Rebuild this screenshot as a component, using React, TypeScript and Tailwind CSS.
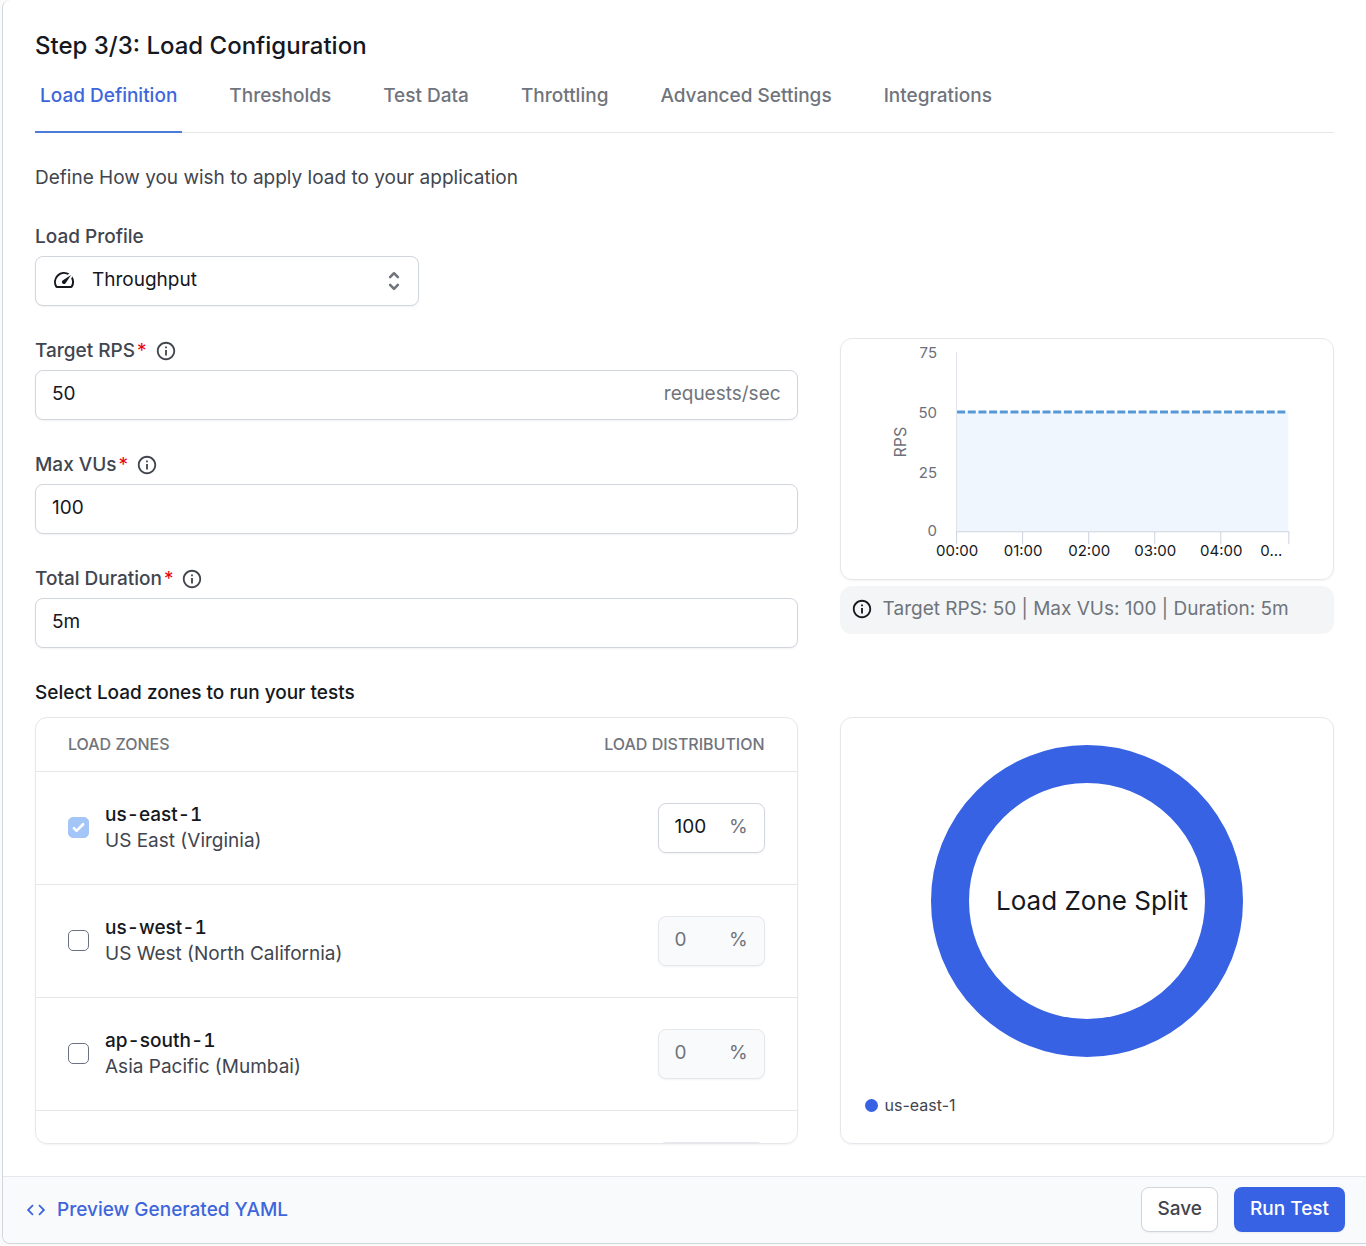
import React from "react";
import { MdCode, MdInfoOutline, MdSpeed } from "react-icons/md";
import { HiSelector } from "react-icons/hi";

const tabs = [
  "Load Definition",
  "Thresholds",
  "Test Data",
  "Throttling",
  "Advanced Settings",
  "Integrations",
];

const fields = [
  { id: "target-rps", label: "Target RPS", value: "50", unit: "requests/sec" },
  { id: "max-vus", label: "Max VUs", value: "100" },
  { id: "duration", label: "Total Duration", value: "5m" },
];

const zones = [
  { id: "us-east-1", name: "US East (Virginia)", share: 100, selected: true },
  { id: "us-west-1", name: "US West (North California)", share: 0, selected: false },
  { id: "ap-south-1", name: "Asia Pacific (Mumbai)", share: 0, selected: false },
  { id: "eu-west-1", name: "Europe (Ireland)", share: 0, selected: false },
];

const yTicks = [
  { label: "75", y: 14 },
  { label: "50", y: 74 },
  { label: "25", y: 134 },
  { label: "0", y: 192 },
];

const xTicks = [
  { label: "00:00", x: 116 },
  { label: "01:00", x: 182 },
  { label: "02:00", x: 248 },
  { label: "03:00", x: 314 },
  { label: "04:00", x: 380 },
];

const LoadChart = () => (
  <svg viewBox="0 0 492 240" className="block w-full" role="img" aria-label="Requests per second over time">
    <rect x="115" y="73" width="332" height="119" fill="#f0f6fe" />
    <path d="M115.5 13V192" stroke="#e0e3e8" />
    <path
      d="M115 192.5H447.5M115.5 192V205M181.5 192V205M247.5 192V205M313.5 192V205M379.5 192V205M447.5 192V205"
      stroke="#ccd2e0"
      fill="none"
    />
    <path d="M116 73H444" stroke="#5499d6" strokeWidth="3" strokeDasharray="8 2.67" />
    {yTicks.map((tick) => (
      <text key={tick.label} x="96" y={tick.y + 5} textAnchor="end" fontSize="15" fill="#6e7079">
        {tick.label}
      </text>
    ))}
    {xTicks.map((tick) => (
      <text key={tick.label} x={tick.x} y="217" textAnchor="middle" fontSize="15" fill="#15181e">
        {tick.label}
      </text>
    ))}
    <text x="430" y="217" textAnchor="middle" fontSize="15" fill="#15181e">
      0...
    </text>
    <text transform="translate(65 103) rotate(-90)" textAnchor="middle" fontSize="16" fill="#6e7079">
      RPS
    </text>
  </svg>
);

const App = () => {
  return (
    <div className="bg-[#fafafa] pb-[2px] pl-[2px] font-['Inter',sans-serif] text-[19px] leading-7 text-[#15181e]">
      <div className="overflow-hidden rounded-l-lg border-b border-l border-gray-300 bg-white">
        <main className="px-8 pt-8 pb-8">
          <h1 className="text-2xl leading-7 font-medium">Step 3/3: Load Configuration</h1>
          <nav className="mt-[22px] flex gap-[42px] border-b border-gray-200" aria-label="Configuration">
            {tabs.map((tab, i) => (
              <a
                key={tab}
                href="#"
                className={
                  i === 0
                    ? "-mb-px border-b-2 border-[#4a7bd8] px-[5px] pb-[21px] font-medium text-[#3e66dc]"
                    : "-mb-px border-b-2 border-transparent px-[5px] pb-[21px] font-medium text-[#70747c]"
                }
              >
                {tab}
              </a>
            ))}
          </nav>

          <p className="mt-[31px] text-[#41454e]">Define How you wish to apply load to your application</p>

          <div className="mt-8 w-96">
            <label htmlFor="profile" className="block leading-[26px] font-medium text-[#41454e]">
              Load Profile
            </label>
            <div className="relative mt-[6px]">
              <select
                id="profile"
                className="h-[50px] w-full appearance-none rounded-lg border border-gray-300 bg-white pb-[3px] pl-14 shadow-xs"
              >
                <option>Throughput</option>
              </select>
              <MdSpeed className="pointer-events-none absolute top-3 left-[17px] size-6" />
              <HiSelector className="pointer-events-none absolute top-3 right-3 size-[26px] text-[#70747c]" />
            </div>
          </div>

          <div className="mt-8 grid grid-cols-5 gap-x-[42px]">
            <div className="col-span-3 flex flex-col gap-8">
              {fields.map((field) => (
                <div key={field.id}>
                  <div className="flex items-center leading-[26px]">
                    <label htmlFor={field.id} className="font-medium text-[#41454e]">
                      {field.label}
                      <span className="ml-[2px] font-normal text-red-600">*</span>
                    </label>
                    <MdInfoOutline className="ml-2 size-[22px] text-[#41454e]" />
                  </div>
                  <div className="mt-[6px] flex h-[50px] items-center rounded-lg border border-gray-300 bg-white px-4 pb-[3px] shadow-xs">
                    <input id={field.id} defaultValue={field.value} className="min-w-0 flex-1 outline-none" />
                    {field.unit && <span className="text-[#70747c]">{field.unit}</span>}
                  </div>
                </div>
              ))}
            </div>
            <div className="col-span-2">
              <div className="rounded-xl border border-gray-200 shadow-xs">
                <LoadChart />
              </div>
              <div className="mt-[6px] flex h-12 items-center gap-[10px] rounded-xl bg-[#f3f5f6] px-[11px] pb-[2px] text-[#70747c]">
                <MdInfoOutline className="size-[22px] shrink-0 text-[#15181e]" />
                <span>Target RPS: 50 | Max VUs: 100 | Duration: 5m</span>
              </div>
            </div>
          </div>

          <h2 className="mt-8 leading-[26px] font-medium">Select Load zones to run your tests</h2>
          <div className="mt-[11px] grid grid-cols-5 gap-x-[42px]">
            <div className="col-span-3 h-[427px] overflow-y-auto rounded-xl border border-gray-200 shadow-xs [scrollbar-width:none]">
              <table className="w-full border-collapse">
                <thead>
                  <tr className="h-[53px] border-b border-gray-200 text-base text-[#70747c]">
                    <th className="pl-8 text-left font-medium">LOAD ZONES</th>
                    <th className="pr-8 text-right font-medium">LOAD DISTRIBUTION</th>
                  </tr>
                </thead>
                <tbody>
                  {zones.map((zone) => (
                    <tr key={zone.id} className="h-[113px] border-b border-gray-200">
                      <td className="pl-8">
                        <div className="flex items-center gap-4">
                          <input
                            id={zone.id}
                            type="checkbox"
                            defaultChecked={zone.selected}
                            disabled={zone.selected}
                            className="peer sr-only"
                          />
                          <label
                            htmlFor={zone.id}
                            className="flex size-[21px] shrink-0 items-center justify-center rounded-[5px] border border-gray-500 peer-checked:border-[#a4c5f8] peer-checked:bg-[#a4c5f8]"
                          >
                            {zone.selected && (
                              <svg viewBox="0 0 16 16" className="size-[21px] shrink-0 fill-white">
                                <path d="M12.207 4.793a1 1 0 010 1.414l-5 5a1 1 0 01-1.414 0l-2-2a1 1 0 011.414-1.414L6.5 9.086l4.293-4.293a1 1 0 011.414 0z" />
                              </svg>
                            )}
                          </label>
                          <label htmlFor={zone.id} className="leading-[26px]">
                            <span className="block font-medium tabular-nums">{zone.id}</span>
                            <span className="block text-[#41454e]">{zone.name}</span>
                          </label>
                        </div>
                      </td>
                      <td className="pr-8">
                        <div
                          className={
                            zone.selected
                              ? "ml-auto flex h-[50px] w-[107px] items-center rounded-lg border border-gray-300 bg-white px-4 pb-[2px] shadow-xs"
                              : "ml-auto flex h-[50px] w-[107px] items-center rounded-lg border border-gray-200 bg-gray-50 px-4 pb-[2px] text-[#70747c] shadow-xs"
                          }
                        >
                          <input
                            aria-label={`${zone.id} load percentage`}
                            defaultValue={zone.share}
                            disabled={!zone.selected}
                            className="min-w-0 flex-1 outline-none"
                          />
                          <span className="text-[#70747c]">%</span>
                        </div>
                      </td>
                    </tr>
                  ))}
                </tbody>
              </table>
            </div>
            <div className="col-span-2 flex h-[427px] flex-col rounded-xl border border-gray-200 px-6 pt-[27px] shadow-xs">
              <svg viewBox="0 0 312 312" className="mx-auto size-[312px]" role="img" aria-label="Load zone split">
                <circle cx="156" cy="156" r="137" fill="none" stroke="#3762e3" strokeWidth="38" />
                <text x="161" y="165" textAnchor="middle" fontSize="26" fill="#15181e">
                  Load Zone Split
                </text>
              </svg>
              <div className="mt-9 flex items-center gap-[7px] text-base text-[#41454e]">
                <span className="size-[13px] rounded-full bg-[#3762e3]" />
                us-east-1
              </div>
            </div>
          </div>
        </main>

        <footer className="flex items-center justify-between border-t border-gray-200 bg-[#f9fafb] pt-[10px] pr-[21px] pb-[11px] pl-[22px]">
          <a href="#" className="flex items-center gap-[10px] font-medium text-[#3e66dc]">
            <MdCode className="size-[22px]" />
            Preview Generated YAML
          </a>
          <div className="flex gap-4">
            <button className="h-[45px] rounded-lg border border-gray-300 bg-white px-[15px] pb-[2px] font-medium text-[#41454e] shadow-xs">
              Save
            </button>
            <button className="h-[45px] rounded-lg bg-[#3762e3] px-4 pb-[2px] font-medium text-white shadow-xs">
              Run Test
            </button>
          </div>
        </footer>
      </div>
    </div>
  );
};

export default App;
